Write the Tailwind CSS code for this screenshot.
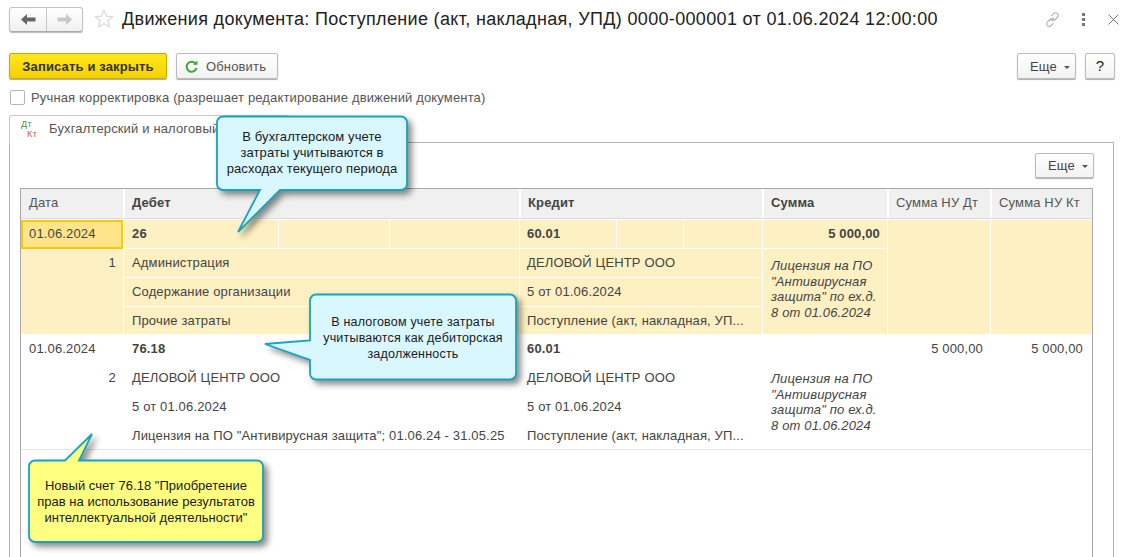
<!DOCTYPE html>
<html lang="ru"><head><meta charset="utf-8">
<script src="https://cdn.jsdelivr.net/npm/@tailwindcss/browser@4"></script></head>
<body class="bg-white overflow-hidden">
<div class="relative w-[1130px] h-[557px] overflow-hidden font-['Liberation_Sans',Arial,sans-serif] text-[13px] tracking-[0.15px] text-[#333] flex flex-col">
  <!-- title bar -->
  <div class="h-[53px] flex items-start shrink-0 pl-[9px] pt-[7px]">
    <div class="flex w-[74px] h-[25px] rounded-[3px] border border-[#c4c4c4] border-b-[#aaa] bg-gradient-to-b from-white to-[#f0f0f0] shadow-[0_1px_1px_#bbb]">
      <div class="w-[37px] flex items-center justify-center border-r border-[#c8c8c8]">
        <svg width="15" height="11" viewBox="0 0 15 11"><path d="M0 5.5 6 0v3.5h8.500v4H6V11z" fill="#666"/></svg>
      </div>
      <div class="flex-1 flex items-center justify-center">
        <svg width="15" height="11" viewBox="0 0 15 11"><path d="M15 5.500 9 0v3.500H.5v4H9V11z" fill="#c8c8c8"/></svg>
      </div>
    </div>
    <svg class="ml-[11px] mt-[2px]" width="20" height="20" viewBox="0 0 20 20"><path d="M10 1.500l2.500 5.600 6 .6-4.500 4 1.300 6L10 14.600 4.700 17.700l1.300-6-4.500-4 6-.6z" fill="none" stroke="#d9d9d9" stroke-width="1.200"/></svg>
    <div class="ml-[8px] text-[18px] leading-[24px] tracking-[0.33px] text-[#222] whitespace-nowrap">Движения документа: Поступление (акт, накладная, УПД) 0000-000001 от 01.06.2024 12:00:00</div>
    <div class="ml-auto flex items-center mt-[4px] pr-[11px]">
      <svg width="17" height="17" viewBox="0 0 16 16" fill="none" stroke="#b0b0b0" stroke-width="1"><path d="M6.500 9.500l3-3M7 4.500l2-2c1.200-1.200 2.700-1.200 3.700-.2s1 2.500-.2 3.700l-2 2c-1 1-2.300 1-3.200.2M9 11.500l-2 2c-1.200 1.200-2.700 1.200-3.700.2s-1-2.500.2-3.700l2-2c1-1 2.300-1 3.200-.2" /></svg>
      <div class="ml-[21px] flex flex-col gap-[2px]"><span class="w-[3px] h-[3px] bg-[#777]"></span><span class="w-[3px] h-[3px] bg-[#777]"></span><span class="w-[3px] h-[3px] bg-[#777]"></span></div>
      <svg class="ml-[23px]" width="11" height="11" viewBox="0 0 11 11" stroke="#777" stroke-width="1"><path d="M.5.500l10 10M10.500.500l-10 10"/></svg>
    </div>
  </div>
  <!-- command bar -->
  <div class="h-[26px] flex shrink-0 pl-[9px] pr-[15px]">
    <button class="w-[158px] h-[26px] pt-[1px] rounded-[2px] border border-[#c9a800] bg-gradient-to-b from-[#ffe81a] to-[#f5d000] shadow-[0_1px_1px_#aaa] font-bold text-[#333] text-[13px]">Записать и закрыть</button>
    <button class="ml-[9px] w-[102px] h-[26px] pt-[1px] pl-[8px] rounded-[2px] border border-[#bbb] bg-gradient-to-b from-white to-[#f2f2f2] shadow-[0_1px_1px_#aaa] flex items-center gap-[8px] text-[#555]">
      <svg width="13" height="13" viewBox="0 0 13 13" fill="none"><path d="M11 4.200A5 5 0 1 0 11.500 8" stroke="#3aa53a" stroke-width="2"/><path d="M8 4.800h4.500V.5z" fill="#3aa53a"/></svg>Обновить</button>
    <button class="ml-auto w-[59px] h-[26px] pt-[1px] pl-[12px] rounded-[2px] border border-[#bbb] bg-gradient-to-b from-white to-[#f2f2f2] shadow-[0_1px_1px_#aaa] flex items-center gap-[7px] text-[#444]">Еще<span class="mt-[2px] border-x-[3px] border-x-transparent border-t-[3px] border-t-[#555]"></span></button>
    <button class="ml-[9px] w-[30px] h-[26px] rounded-[2px] border border-[#bbb] bg-gradient-to-b from-white to-[#f2f2f2] shadow-[0_1px_1px_#aaa] text-[15px] text-[#222]">?</button>
  </div>
  <!-- checkbox -->
  <div class="h-[36px] flex items-center shrink-0 pl-[10px]">
    <span class="w-[15px] h-[15px] rounded-[2px] border border-[#b5b5b5] bg-white"></span>
    <span class="ml-[6px] pt-[2px] text-[#555]">Ручная корректировка (разрешает редактирование движений документа)</span>
  </div>
  <!-- tabs panel -->
  <div class="relative flex-1 ml-[9px] mr-[16px]">
    <div class="h-[28px] w-[280px] rounded-t-[3px] border border-b-0 border-[#c8c8c8] bg-white relative z-10 flex items-start pl-[11px] pt-[3px]">
      <div class="w-[20px] h-[22px] relative text-[9px] leading-[8px] tracking-[0.5px] shrink-0 mt-[1px]">
        <span class="absolute left-0 top-0 text-[#2e9a45]">Дт</span><span class="absolute left-[6px] top-[10px] text-[#d9534f]">Кт</span>
      </div>
      <span class="ml-[8px] text-[#555] whitespace-nowrap">Бухгалтерский и налоговый учет</span>
    </div>
    <div class="absolute left-0 right-0 top-[27px] bottom-[-2px] border border-[#b5b5b5] pl-[10px] pr-[20px]">
      <div class="h-[45px] flex justify-end items-start pt-[10px]">
        <button class="w-[59px] h-[25px] mr-[-1px] pl-[12px] rounded-[2px] border border-[#bbb] bg-gradient-to-b from-white to-[#f2f2f2] shadow-[0_1px_1px_#aaa] flex items-center gap-[7px] text-[#444]">Еще<span class="mt-[2px] border-x-[3px] border-x-transparent border-t-[3px] border-t-[#555]"></span></button>
      </div>
      <div class="h-[400px] border-x border-t border-[#a8a8a8]">
        <!-- header -->
        <div class="grid grid-cols-[102px_396px_243px_125px_103px_1fr] h-[30px] bg-[#f0f0f0] border-b border-[#dcdcdc] leading-[28px] text-[#555]">
          <div class="pl-[8px]">Дата</div>
          <div class="pl-[7px] border-l-2 border-white font-bold text-[#444]">Дебет</div>
          <div class="pl-[7px] border-l-2 border-white font-bold text-[#444]">Кредит</div>
          <div class="pl-[7px] border-l-2 border-white font-bold text-[#444]">Сумма</div>
          <div class="pl-[7px] border-l-2 border-white">Сумма НУ Дт</div>
          <div class="pl-[7px] border-l-2 border-white">Сумма НУ Кт</div>
        </div>
        <!-- group 1 -->
        <div class="grid grid-cols-[102px_396px_243px_125px_103px_1fr] grid-rows-[29px_29px_29px_28px] bg-[#fdf0c3] leading-[28px] text-[#444] [&>div]:border-white mt-px">
          <div class="bg-[#ffe58a] border-2 !border-[#f6c90e] leading-[24px] pl-[6px]">01.06.2024</div>
          <div class="border-l border-b grid grid-cols-[154px_111px_1fr] font-bold"><span class="pl-[8px]">26</span><span class="border-l border-white"></span><span class="border-l border-white"></span></div>
          <div class="border-l border-b grid grid-cols-[96px_67px_1fr] font-bold"><span class="pl-[7px]">60.01</span><span class="border-l border-white"></span><span class="border-l border-white"></span></div>
          <div class="border-l border-b font-bold text-right pr-[7px]">5 000,00</div>
          <div class="border-l row-span-4"></div>
          <div class="border-l row-span-4"></div>
          <div class="row-span-3 text-right pr-[7px]">1</div>
          <div class="border-l border-b pl-[8px]">Администрация</div>
          <div class="border-l border-b pl-[7px]">ДЕЛОВОЙ ЦЕНТР ООО</div>
          <div class="border-l row-span-3 pl-[8px] pt-[9px] pr-[6px] italic leading-[15.500px]">Лицензия на ПО "Антивирусная защита" по ех.д. 8 от 01.06.2024</div>
          <div class="col-start-2 border-l border-b pl-[8px]">Содержание организации</div>
          <div class="border-l border-b pl-[7px]">5 от 01.06.2024</div>
          <div class="col-start-2 border-l pl-[8px]">Прочие затраты</div>
          <div class="border-l pl-[7px] truncate">Поступление (акт, накладная, УП...</div>
        </div>
        <!-- group 2 -->
        <div class="grid grid-cols-[102px_396px_243px_125px_103px_1fr] grid-rows-[29px_29px_29px_27px] leading-[28px] text-[#444] border-b border-[#e4e4e4] mt-[-1px] border-t border-t-white">
          <div class="pl-[8px]">01.06.2024</div>
          <div class="pl-[9px] font-bold">76.18</div>
          <div class="pl-[8px] font-bold">60.01</div>
          <div></div>
          <div class="text-right pr-[7px]">5 000,00</div>
          <div class="text-right pr-[9px]">5 000,00</div>
          <div class="row-span-3 text-right pr-[7px]">2</div>
          <div class="pl-[9px]">ДЕЛОВОЙ ЦЕНТР ООО</div>
          <div class="pl-[8px]">ДЕЛОВОЙ ЦЕНТР ООО</div>
          <div class="row-span-3 pl-[9px] pt-[7px] pr-[6px] italic leading-[15.500px]">Лицензия на ПО "Антивирусная защита" по ех.д. 8 от 01.06.2024</div>
          <div class="col-span-2 row-span-3"></div>
          <div class="col-start-2 pl-[9px]">5 от 01.06.2024</div>
          <div class="pl-[8px]">5 от 01.06.2024</div>
          <div class="col-start-2 pl-[9px]">Лицензия на ПО "Антивирусная защита"; 01.06.24 - 31.05.25</div>
          <div class="pl-[8px] truncate">Поступление (акт, накладная, УП...</div>
        </div>
      </div>
    </div>
  </div>

  <!-- callout 1 -->
  <div class="absolute z-20 left-[210px] top-[110px] w-[210px] h-[135px]">
    <svg class="absolute inset-0 drop-shadow-[4px_4px_3px_rgba(0,0,0,0.45)]" width="210" height="135" viewBox="0 0 210 135">
      <path d="M13 6.500h178a6 6 0 0 1 6 6V74a6 6 0 0 1-6 6H70L28 122l22-42H13a6 6 0 0 1-6-6V12.500a6 6 0 0 1 6-6z" fill="#d9f7ff" stroke="#17a3c4" stroke-width="1.800"/>
    </svg>
    <div class="absolute left-[7px] top-[19px] w-[190px] text-center leading-[16px] tracking-[0.1px] text-[#1a1a1a]">В бухгалтерском учете<br>затраты учитываются в<br>расходах текущего периода</div>
  </div>
  <!-- callout 2 -->
  <div class="absolute z-20 left-[260px] top-[290px] w-[270px] h-[100px]">
    <svg class="absolute inset-0 drop-shadow-[4px_4px_3px_rgba(0,0,0,0.45)]" width="270" height="100" viewBox="0 0 270 100">
      <path d="M56 4.500h194a6 6 0 0 1 6 6V83.500a6 6 0 0 1-6 6H56a6 6 0 0 1-6-6V70L5 54l45-3.500V10.500a6 6 0 0 1 6-6z" fill="#d9f7ff" stroke="#17a3c4" stroke-width="1.800"/>
    </svg>
    <div class="absolute left-[50px] top-[24px] w-[206px] text-center text-[12.500px] leading-[16px] tracking-[0.2px] text-[#1a1a1a]">В налоговом учете затраты<br>учитываются как дебиторская<br>задолженность</div>
  </div>
  <!-- callout 3 -->
  <div class="absolute z-20 left-[20px] top-[425px] w-[255px] h-[125px]">
    <svg class="absolute inset-0 drop-shadow-[4px_4px_3px_rgba(0,0,0,0.45)]" width="255" height="125" viewBox="0 0 255 125">
      <path d="M15 35.500h30L72 9 59 35.500h178a6 6 0 0 1 6 6V111a6 6 0 0 1-6 6H15a6 6 0 0 1-6-6V41.500a6 6 0 0 1 6-6z" fill="#ffff80" stroke="#17a3c4" stroke-width="1.800"/>
    </svg>
    <div class="absolute left-[9px] top-[53px] w-[234px] text-center leading-[16px] tracking-[0.03px] text-[#1a1a1a]">Новый счет 76.18 "Приобретение<br>прав на использование результатов<br>интеллектуальной деятельности"</div>
  </div>
</div>
</body></html>
